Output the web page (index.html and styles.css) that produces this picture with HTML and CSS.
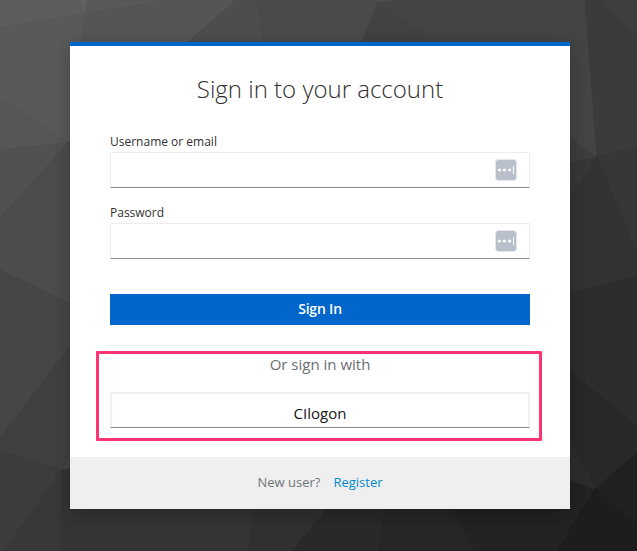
FILE: index.html
```html
<!DOCTYPE html>
<html lang="en">
<head>
<meta charset="utf-8">
<title>Sign in to your account</title>
<link rel="stylesheet" href="styles.css">
</head>
<body>
<svg class="backdrop" viewBox="0 0 637 551" aria-hidden="true">
  <rect width="637" height="551" fill="#444"/>
  <path color="#5c5c5c" d="M0 0H79L85 14L0 28Z"/>
  <path color="#606060" d="M79 0H88L85 14Z"/>
  <path color="#585858" d="M88 0H174L85 14Z"/>
  <path color="#595959" d="M0 28L85 14L82 60L69 143L0 98Z"/>
  <path color="#555" d="M85 14L174 0H236L188 42L167 60H80L82 42Z"/>
  <path color="#4d4d4d" d="M236 0H257L264 42V60H167Z"/>
  <path color="#4a4a4a" d="M257 0H378V2L355 60H267Z"/>
  <path color="#4e4e4e" d="M366 0H395L378 2Z"/>
  <path color="#424242" d="M378 2L355 60H460Z"/>
  <path color="#3b3b3b" d="M585 0H637V147L597 157Z"/>
  <path color="#3e3e3e" d="M600 0H637V37Z"/>
  <path color="#565656" d="M0 98L68 143L0 150Z"/>
  <path color="#515151" d="M0 150L68 143L0 218Z"/>
  <path color="#4c4c4c" d="M0 218L68 143H80V309L0 270Z"/>
  <path color="#464646" d="M0 270L80 309V333L0 438Z"/>
  <path color="#404040" d="M0 438L80 333V425L62 470L0 451Z"/>
  <path color="#3c3c3c" d="M0 451L62 470L4 551H0Z"/>
  <path color="#383838" d="M62 470L61 551H4Z"/>
  <path color="#343434" d="M62 470L80 466H258L249 551H61Z"/>
  <path color="#303030" d="M256 490H343L292 551H249Z"/>
  <path color="#292929" d="M343 490H389L378 551H292Z"/>
  <path color="#262626" d="M389 490H442L476 551H378Z"/>
  <path color="#232323" d="M442 490L560 476L595 489L557 551H476Z"/>
  <path color="#3d3d3d" d="M560 130L597 157L560 165Z"/>
  <path color="#373737" d="M560 165L597 157L560 214Z"/>
  <path color="#373737" d="M597 157L637 147V253Z"/>
  <path color="#323232" d="M597 157L637 253V277L560 296V214Z"/>
  <path color="#2d2d2d" d="M560 295L637 277V426L560 363Z"/>
  <path color="#282828" d="M560 363L637 426V453L595 489L560 423Z"/>
  <path color="#2c2c2c" d="M560 423L595 489L560 476Z"/>
  <path color="#202020" d="M595 489L637 453V526Z"/>
  <path color="#1d1d1d" d="M595 489L637 526V551H557Z"/>
</svg>
<main class="card">
  <h1 class="title">Sign in to your account</h1>
  <form class="form">
    <label class="label" for="username">Username or email</label>
    <div class="field">
      <input class="input" id="username" type="text">
      <svg class="filler" viewBox="0 0 22 22"><rect x=".5" y=".5" width="21" height="21" rx="3" fill="#b9c0cc" stroke="#e3e6eb"/><g fill="#fff"><circle cx="4.4" cy="11" r="1.6"/><circle cx="9.4" cy="11" r="1.6"/><circle cx="14.6" cy="11" r="1.6"/><path d="M18 7H19V15H18Z"/></g></svg>
    </div>
    <label class="label" for="password">Password</label>
    <div class="field">
      <input class="input" id="password" type="password">
      <svg class="filler" viewBox="0 0 22 22"><rect x=".5" y=".5" width="21" height="21" rx="3" fill="#b9c0cc" stroke="#e3e6eb"/><g fill="#fff"><circle cx="4.4" cy="11" r="1.6"/><circle cx="9.4" cy="11" r="1.6"/><circle cx="14.6" cy="11" r="1.6"/><path d="M18 7H19V15H18Z"/></g></svg>
    </div>
    <button class="submit" type="button">Sign In</button>
  </form>
  <section class="social">
    <h2 class="social-title">Or sign in with</h2>
    <a class="provider">CIlogon</a>
    <div class="highlight"></div>
  </section>
  <footer class="footer"><span>New user?</span><a class="register">Register</a></footer>
</main>
</body>
</html>
```

FILE: styles.css
```css
* { box-sizing: border-box; }
body {
  margin: 0;
  height: 551px;
  padding: 42px 67px 0 70px;
  overflow: hidden;
  background: #333;
  font-family: "Open Sans", sans-serif;
  color: #303030;
}
.backdrop {
  position: absolute;
  top: 0;
  left: 0;
  width: 637px;
  height: 551px;
  z-index: -1;
}
.backdrop path {
  fill: currentColor;
  stroke: currentColor;
  stroke-width: .7;
  stroke-linejoin: round;
}
.card {
  width: 500px;
  height: 467px;
  display: flex;
  flex-direction: column;
  background: #fff;
  border-top: 4px solid #06c;
  box-shadow: 0 8px 16px rgba(3, 3, 3, .14), 0 0 16px rgba(3, 3, 3, .1);
}
.title {
  margin: 25px 0 0;
  height: 36px;
  font-size: 24px;
  line-height: 36px;
  font-weight: 300;
  text-align: center;
}
.form {
  padding: 25px 40px 0;
  display: flex;
  flex-direction: column;
}
.label {
  height: 20px;
  font-size: 12px;
  line-height: 20px;
}
.field {
  position: relative;
  height: 36px;
  margin-bottom: 15px;
}
.input {
  display: block;
  width: 100%;
  height: 36px;
  border: 1px solid #ededed;
  border-bottom-color: #8a8d90;
  background: #fff;
}
.filler {
  position: absolute;
  top: 7px;
  right: 13px;
  width: 22px;
  height: 22px;
}
.submit {
  height: 31px;
  margin-top: 20px;
  padding: 0 0 2px;
  border: 0;
  background: #06c;
  color: #fff;
  font: 600 14px/29px "Open Sans", sans-serif;
  letter-spacing: -.2px;
}
.social {
  position: relative;
  margin: 20px 40px 0;
  border-top: 1px solid #ededed;
}
.social-title {
  margin: 6px 0 16px;
  height: 24px;
  font-size: 15px;
  line-height: 24px;
  font-weight: 400;
  color: #6a6e73;
  text-align: center;
}
.provider {
  display: block;
  height: 36px;
  border: 1px solid #f0f0f0;
  border-bottom-color: #8a8d90;
  box-shadow: inset 1px 1px #f0f0f0, inset -1px 0 #f0f0f0;
  font-size: 15px;
  line-height: 40px;
  color: #151515;
  text-align: center;
}
.highlight {
  position: absolute;
  top: 5px;
  left: -14px;
  width: 446px;
  height: 90px;
  border: 3px solid #ff3371;
  border-radius: 1px;
}
.footer {
  margin-top: auto;
  height: 52px;
  padding-bottom: 2px;
  display: flex;
  justify-content: center;
  align-items: center;
  gap: 13px;
  background: #efefef;
  color: #6f7378;
  font-size: 13px;
}
.register { color: #0088ce; }
```
